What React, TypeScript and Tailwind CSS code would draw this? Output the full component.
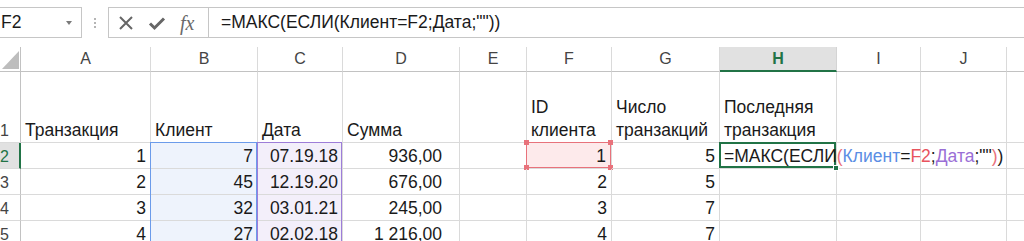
import clsx from "clsx";
import type { ReactNode } from "react";

const letters = ["A", "B", "C", "D", "E", "F", "G", "H", "I", "J", ""];

const body: string[][] = [
  ["1", "7", "07.19.18", "936,00", "", "1", "5"],
  ["2", "45", "12.19.20", "676,00", "", "2", "5"],
  ["3", "32", "03.01.21", "245,00", "", "3", "7"],
  ["4", "27", "02.02.18", "1 216,00", "", "4", "7"],
];

function Formula({ colored }: { colored?: boolean }) {
  if (!colored) return <span>=МАКС(ЕСЛИ(Клиент=F2;Дата;""))</span>;
  return (
    <span>
      =МАКС(ЕСЛИ<span className="text-[#e9707a]">(</span>
      <span className="text-[#5b8ee4]">Клиент</span>=<span className="text-[#e8545e]">F2</span>;
      <span className="text-[#9a6fd6]">Дата</span>;""<span className="text-[#e9707a]">)</span>)
    </span>
  );
}

function Cell({
  children,
  right,
  className,
}: {
  children?: ReactNode;
  right?: boolean;
  className?: string;
}) {
  return (
    <div
      className={clsx(
        "relative flex items-end border-r border-b border-[#dadada] leading-[23px] whitespace-pre",
        right ? "justify-end pr-[4px]" : "pl-[4px]",
        className
      )}
    >
      {children}
    </div>
  );
}

export default function App() {
  return (
    <div className="w-[1024px] h-[241px] overflow-hidden bg-white text-[17.5px] text-[#1a1a1a] font-['Liberation_Sans',Arial,sans-serif]">
      {/* formula bar */}
      <div className="flex h-[38px] pt-[7px]">
        <div className="ml-[-2px] w-[84px] h-[31px] border border-[#c6c6c6] flex items-center justify-between pl-[2px] pr-[9px]">
          <span>F2</span>
          <span className="w-0 h-0 border-l-[3px] border-r-[3px] border-t-[4px] border-l-transparent border-r-transparent border-t-[#7a7a7a]" />
        </div>
        <div className="w-[26px] flex justify-center items-center">
          <div className="flex flex-col gap-[2px]">
            <span className="w-[2px] h-[2px] bg-[#b5b5b5]" />
            <span className="w-[2px] h-[2px] bg-[#b5b5b5]" />
            <span className="w-[2px] h-[2px] bg-[#b5b5b5]" />
          </div>
        </div>
        <div className="w-[101px] h-[31px] border border-[#c6c6c6] flex items-center pl-[9px] gap-[14px]">
          <svg width="16" height="16" viewBox="0 0 16 16">
            <path d="M2 2L14 14M14 2L2 14" stroke="#666" strokeWidth="2" fill="none" />
          </svg>
          <svg width="18" height="16" viewBox="0 0 18 16">
            <path d="M2 8.5L6.5 13L16 3.5" stroke="#666" strokeWidth="3" fill="none" />
          </svg>
          <span className="italic text-[20px] text-[#6a6a6a] font-['Liberation_Serif',serif] leading-none">
            fx
          </span>
        </div>
        <div className="ml-[-1px] flex-1 h-[31px] border border-r-0 border-[#c6c6c6] flex items-center pl-[12px]">
          <Formula />
        </div>
      </div>
      <div className="h-[9px]" />

      {/* sheet */}
      <div className="grid grid-cols-[21px_130px_107px_85px_117px_67px_85px_108px_117px_84px_86px_100px] grid-rows-[25px_71px_26px_26px_26px_26px]">
        {/* column header row, select-all corner */}
        <div className="flex items-end justify-end pr-[1px] pb-[2px] border-r border-b border-[#c2c2c2]">
          <svg width="17" height="18" viewBox="0 0 17 18" className="block shrink-0">
            <path d="M0 18H17V0Z" fill="#bdbdbd" />
          </svg>
        </div>
        {letters.map((l, i) => (
          <div
            key={i}
            className={clsx(
              "flex items-center justify-center text-[16px] border-r",
              l === "H"
                ? "bg-[#e1e1e1] text-[#217346] font-bold border-b-2 border-b-[#217346] border-r-[#d4d4d4]"
                : "text-[#444] border-b border-b-[#c2c2c2] border-r-[#dadada]"
            )}
          >
            {l}
          </div>
        ))}

        {/* row 1 */}
        <div className="flex items-end leading-[23px] text-[16px] text-[#444] border-r border-b border-[#c2c2c2] border-b-[#dadada]">1</div>
        <Cell>Транзакция</Cell>
        <Cell>Клиент</Cell>
        <Cell>Дата</Cell>
        <Cell>Сумма</Cell>
        <Cell />
        <Cell>{"ID\nклиента"}</Cell>
        <Cell>{"Число\nтранзакций"}</Cell>
        <Cell>{"Последняя\nтранзакция"}</Cell>
        <Cell />
        <Cell />
        <Cell />

        {body.map((r, ri) => (
          <div key={ri} className="contents">
            <div
              className={clsx(
                "flex items-end leading-[23px] text-[16px] border-b border-b-[#dadada]",
                ri === 0
                  ? "bg-[#e1e1e1] text-[#217346] border-r-2 border-r-[#217346]"
                  : "text-[#444] border-r border-r-[#c2c2c2]"
              )}
            >
              {ri + 2}
            </div>
            <Cell right>{r[0]}</Cell>
            <Cell right className="bg-[#eef3fc]">
              <div
                className={clsx(
                  "absolute -left-px right-0 -bottom-px border-x border-[#6b9bea]",
                  ri === 0 ? "-top-px border-t" : "top-0"
                )}
              />
              <span className="relative">{r[1]}</span>
            </Cell>
            <Cell right className="bg-[#f3effa]">
              <div
                className={clsx(
                  "absolute -left-px right-0 -bottom-px border-x border-[#9d7dd8]",
                  ri === 0 ? "-top-px border-t" : "top-0"
                )}
              />
              <span className="relative">{r[2]}</span>
            </Cell>
            <Cell right className="pr-[17px]">{r[3]}</Cell>
            <Cell />
            <Cell right className={clsx(ri === 0 && "bg-[#fdeaeb] pr-[5px]")}>
              {ri === 0 && (
                <div className="absolute -left-px -top-px right-0 bottom-0 border border-[#e8727b]">
                  <span className="absolute -left-[3px] -top-[3px] w-[5px] h-[5px] bg-[#e8727b]" />
                  <span className="absolute -right-[3px] -top-[3px] w-[5px] h-[5px] bg-[#e8727b]" />
                  <span className="absolute -left-[3px] -bottom-[3px] w-[5px] h-[5px] bg-[#e8727b]" />
                  <span className="absolute -right-[3px] -bottom-[3px] w-[5px] h-[5px] bg-[#e8727b]" />
                </div>
              )}
              <span className="relative">{r[5]}</span>
            </Cell>
            <Cell right>{r[6]}</Cell>
            <Cell className={clsx(ri === 0 && "pl-[3px] z-10")}>
              {ri === 0 && (
                <>
                  <div className="absolute -left-px -top-px right-0 bottom-0 border-2 border-[#217346]" />
                  <span className="absolute -right-[3px] -bottom-[3px] w-[6px] h-[6px] bg-[#217346] border border-white" />
                  <span className="relative">
                    <Formula colored />
                  </span>
                </>
              )}
            </Cell>
            <Cell />
            <Cell />
            <Cell />
          </div>
        ))}
      </div>
    </div>
  );
}
